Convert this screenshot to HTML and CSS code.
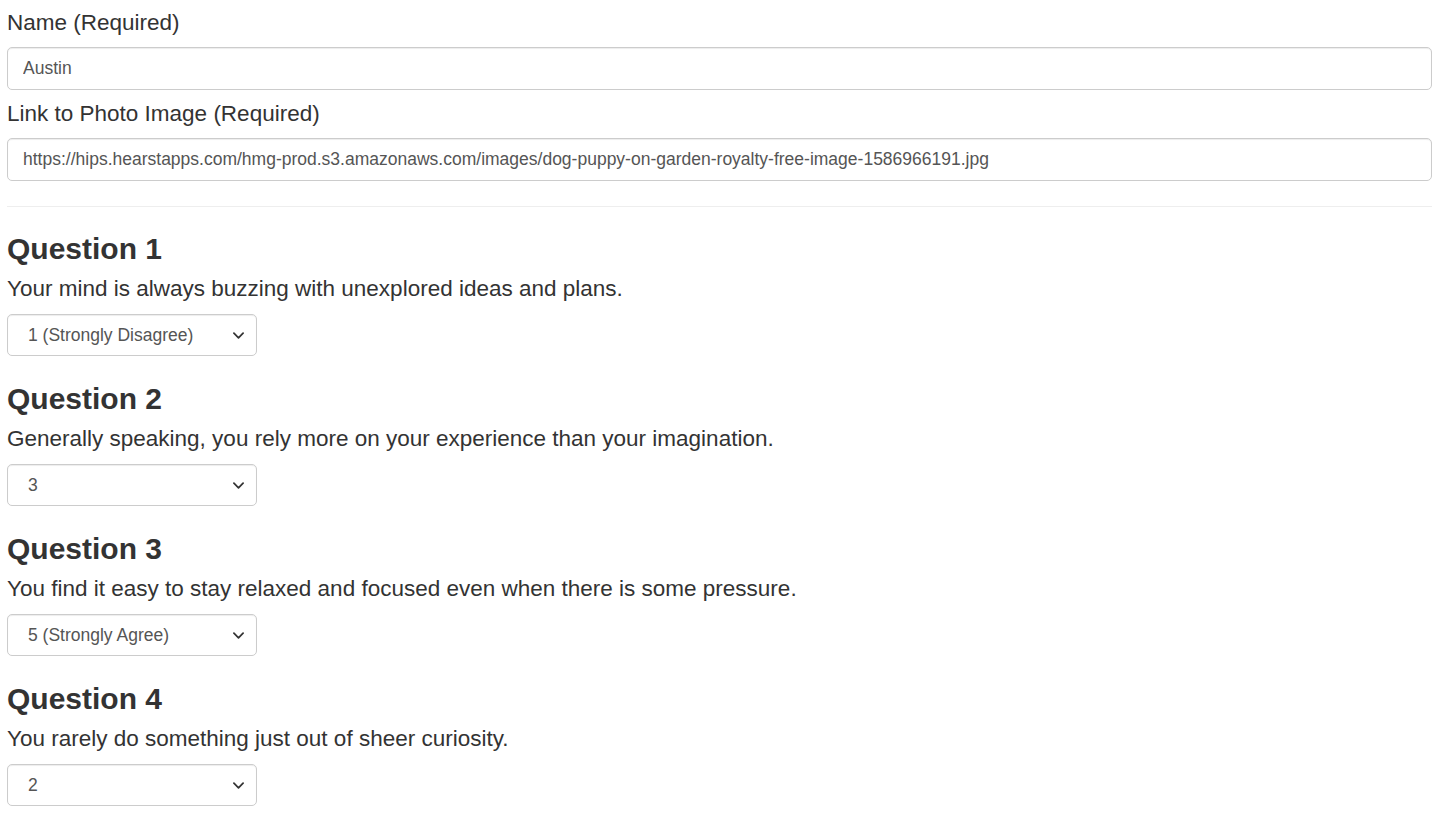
FILE: index.html
```html
<!DOCTYPE html>
<html lang="en">
<head>
<meta charset="utf-8">
<title>Survey</title>
<link rel="stylesheet" href="styles.css">
</head>
<body>
<form class="survey">
  <div class="form-group">
    <label class="field-label" for="name">Name (Required)</label>
    <input class="form-control" id="name" type="text" value="Austin">
  </div>
  <div class="form-group">
    <label class="field-label" for="photo">Link to Photo Image (Required)</label>
    <input class="form-control" id="photo" type="text" value="https://hips.hearstapps.com/hmg-prod.s3.amazonaws.com/images/dog-puppy-on-garden-royalty-free-image-1586966191.jpg">
  </div>
  <hr class="divider">
  <div class="question">
    <h3 class="q-title">Question 1</h3>
    <p class="q-text">Your mind is always buzzing with unexplored ideas and plans.</p>
    <div class="select-wrap">
      <select class="q-select">
        <option selected>1 (Strongly Disagree)</option>
        <option>2</option><option>3</option><option>4</option>
        <option>5 (Strongly Agree)</option>
      </select>
      <svg class="chevron" viewBox="0 0 12 7" aria-hidden="true"><path d="M1 1l5 5 5-5"/></svg>
    </div>
  </div>
  <div class="question">
    <h3 class="q-title">Question 2</h3>
    <p class="q-text">Generally speaking, you rely more on your experience than your imagination.</p>
    <div class="select-wrap">
      <select class="q-select">
        <option>1 (Strongly Disagree)</option>
        <option>2</option><option selected>3</option><option>4</option>
        <option>5 (Strongly Agree)</option>
      </select>
      <svg class="chevron" viewBox="0 0 12 7" aria-hidden="true"><path d="M1 1l5 5 5-5"/></svg>
    </div>
  </div>
  <div class="question">
    <h3 class="q-title">Question 3</h3>
    <p class="q-text">You find it easy to stay relaxed and focused even when there is some pressure.</p>
    <div class="select-wrap">
      <select class="q-select">
        <option>1 (Strongly Disagree)</option>
        <option>2</option><option>3</option><option>4</option>
        <option selected>5 (Strongly Agree)</option>
      </select>
      <svg class="chevron" viewBox="0 0 12 7" aria-hidden="true"><path d="M1 1l5 5 5-5"/></svg>
    </div>
  </div>
  <div class="question">
    <h3 class="q-title">Question 4</h3>
    <p class="q-text">You rarely do something just out of sheer curiosity.</p>
    <div class="select-wrap">
      <select class="q-select">
        <option>1 (Strongly Disagree)</option>
        <option selected>2</option><option>3</option><option>4</option>
        <option>5 (Strongly Agree)</option>
      </select>
      <svg class="chevron" viewBox="0 0 12 7" aria-hidden="true"><path d="M1 1l5 5 5-5"/></svg>
    </div>
  </div>
</form>
</body>
</html>
```
FILE: styles.css
```css
html, body {
  margin: 0;
  padding: 0;
  background: #fff;
}
body {
  font-family: "Liberation Sans", Arial, sans-serif;
  color: #333;
  overflow: hidden;
}
.survey {
  padding: 6.6px 18px 0 7px;
}
.form-group {
  margin-bottom: 18.75px;
}
.form-group + .form-group {
  margin-top: -10.75px;
}
.field-label {
  display: block;
  font-size: 22.5px;
  line-height: 32px;
  font-weight: normal;
  margin-bottom: 8.7px;
}
.form-control {
  display: block;
  box-sizing: border-box;
  width: 100%;
  height: 42.5px;
  padding: 7.5px 15px;
  font-family: "Liberation Sans", Arial, sans-serif;
  font-size: 17.5px;
  color: #555;
  background: #fff;
  border: 1.25px solid #ccc;
  border-radius: 5px;
  box-shadow: inset 0 1px 1px rgba(0,0,0,.075);
  outline: none;
}
.divider {
  margin: 25px 0;
  border: 0;
  border-top: 1.25px solid #eee;
}
.question {
  margin-bottom: 25.8px;
}
.q-title {
  font-size: 30px;
  line-height: 33px;
  font-weight: bold;
  margin: 0;
}
.q-text {
  font-size: 22.5px;
  line-height: 32px;
  margin: 8.2px 0 0;
}
.select-wrap {
  position: relative;
  width: 250px;
  margin-top: 8.5px;
}
.q-select {
  display: block;
  box-sizing: border-box;
  width: 250px;
  height: 42.5px;
  padding: 6px 36px 6px 20px;
  font-family: "Liberation Sans", Arial, sans-serif;
  font-size: 17.5px;
  color: #555;
  background: #fff;
  border: 1.25px solid #ccc;
  border-radius: 5px;
  box-shadow: inset 0 1px 1px rgba(0,0,0,.075);
  -webkit-appearance: none;
  appearance: none;
}
.chevron {
  position: absolute;
  right: 13px;
  top: 50%;
  width: 11px;
  height: 7px;
  margin-top: -3px;
  fill: none;
  stroke: #333;
  stroke-width: 1.9;
  stroke-linecap: round;
  stroke-linejoin: round;
  pointer-events: none;
}
```
